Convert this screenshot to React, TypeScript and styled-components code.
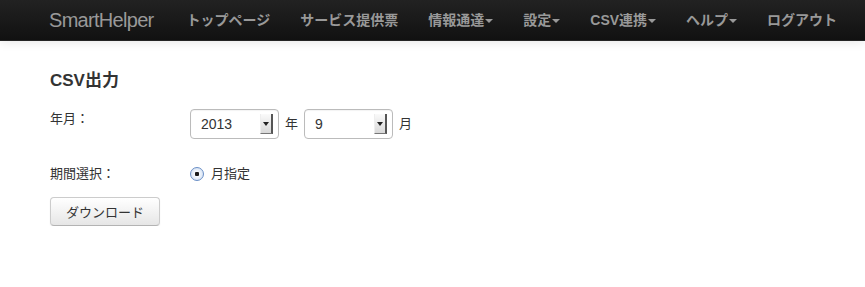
import React from "react";
import styled, { createGlobalStyle } from "styled-components";

const Global = createGlobalStyle`
  html, body { margin: 0; padding: 0; background: #fff; }
  body {
    font-family: "Liberation Sans", "Noto Sans CJK JP", sans-serif;
    font-size: 14px;
    line-height: 20px;
    color: #333;
  }
`;

const Navbar = styled.div`
  height: 40px;
  background: linear-gradient(#222, #111);
  border-bottom: 1px solid #252525;
  box-shadow: 0 1px 10px rgba(0, 0, 0, 0.1);
  display: flex;
  align-items: center;
  padding-left: 29px;
`;

const Brand = styled.a`
  padding: 0 18px 0 20px;
  font-size: 20px;
  font-weight: 300;
  color: #999;
  letter-spacing: -0.7px;
  line-height: 40px;
  text-decoration: none;
`;

const NavList = styled.ul`
  display: flex;
  list-style: none;
  margin: 0;
  padding: 0;
`;

const NavItem = styled.li`
  padding: 0 15px;
  line-height: 40px;
  font-size: 14px;
  font-weight: bold;
  color: #999;
  display: flex;
  align-items: center;
  white-space: nowrap;
`;

const Caret = styled.span`
  display: inline-block;
  width: 0;
  height: 0;
  margin-left: 1px;
  margin-top: 1px;
  border-top: 4px solid #999;
  border-left: 4px solid transparent;
  border-right: 4px solid transparent;
`;

const Content = styled.div`
  padding: 28px 50px 0;
`;

const Heading = styled.h4`
  margin: 0 0 16px;
  font-size: 17px;
  font-weight: bold;
  line-height: 24px;
  color: #333;
`;

const FormRow = styled.div<{ $gap?: number }>`
  display: flex;
  align-items: flex-start;
  margin-bottom: ${(p) => p.$gap ?? 0}px;
`;

const Label = styled.div`
  width: 140px;
  font-size: 13px;
  color: #333;
`;

const Controls = styled.div`
  display: flex;
  align-items: center;
  gap: 6px;
  font-size: 13px;
`;

const Select = styled.div`
  box-sizing: border-box;
  width: 89px;
  height: 30px;
  border: 1px solid #bbb;
  border-radius: 4px;
  background: #fff;
  display: flex;
  align-items: center;
  justify-content: space-between;
  padding: 0 5px 0 10px;
  font-size: 14px;
  color: #333;
  box-shadow: inset 0 1px 1px rgba(0, 0, 0, 0.05);
`;

const Arrow = styled.div`
  box-sizing: border-box;
  width: 13px;
  height: 20px;
  background: linear-gradient(#fafafa, #d8d8d8);
  border-right: 2px solid #555;
  border-bottom: 1px solid #777;
  border-left: 1px solid #eee;
  display: flex;
  align-items: center;
  justify-content: center;
  &::after {
    content: "";
    width: 0;
    height: 0;
    border-top: 4px solid #222;
    border-left: 3px solid transparent;
    border-right: 3px solid transparent;
  }
`;

const Unit = styled.span`
  font-size: 13px;
`;

const RadioLabel = styled.label`
  display: flex;
  align-items: center;
  gap: 7px;
  font-size: 13px;
`;

const Radio = styled.span`
  box-sizing: border-box;
  width: 14px;
  height: 14px;
  border-radius: 50%;
  border: 1px solid #6a8fc6;
  background: radial-gradient(circle, #1a1a1a 0 2px, #f4f8fd 2.5px, #c9d8ee 100%);
`;

const Button = styled.button`
  box-sizing: border-box;
  width: 110px;
  height: 29px;
  padding: 0 12px;
  font-family: inherit;
  font-size: 13px;
  color: #333;
  background: linear-gradient(#fff, #e6e6e6);
  border: 1px solid #ccc;
  border-bottom-color: #b3b3b3;
  border-radius: 4px;
  box-shadow: inset 0 1px 0 rgba(255, 255, 255, 0.2), 0 1px 2px rgba(0, 0, 0, 0.05);
`;

export default function App() {
  return (
    <>
      <Global />
      <Navbar>
        <Brand>SmartHelper</Brand>
        <NavList>
          <NavItem>トップページ</NavItem>
          <NavItem>サービス提供票</NavItem>
          <NavItem>情報通達<Caret /></NavItem>
          <NavItem>設定<Caret /></NavItem>
          <NavItem>CSV連携<Caret /></NavItem>
          <NavItem>ヘルプ<Caret /></NavItem>
          <NavItem>ログアウト</NavItem>
        </NavList>
      </Navbar>
      <Content>
        <Heading>CSV出力</Heading>
        <FormRow $gap={25}>
          <Label>年月：</Label>
          <Controls>
            <Select>
              2013
              <Arrow />
            </Select>
            <Unit>年</Unit>
            <Select>
              9
              <Arrow />
            </Select>
            <Unit>月</Unit>
          </Controls>
        </FormRow>
        <FormRow $gap={13}>
          <Label>期間選択：</Label>
          <Controls>
            <RadioLabel>
              <Radio />
              月指定
            </RadioLabel>
          </Controls>
        </FormRow>
        <Button>ダウンロード</Button>
      </Content>
    </>
  );
}
